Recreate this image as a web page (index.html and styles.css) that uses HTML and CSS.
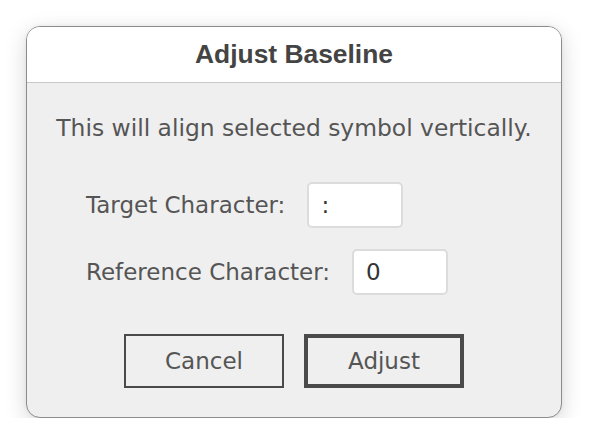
FILE: index.html
```html
<!DOCTYPE html>
<html lang="en">
<head>
<meta charset="utf-8">
<title>Adjust Baseline</title>
<link rel="stylesheet" href="styles.css">
</head>
<body>
<div class="dialog">
  <div class="dialog-header">
    <h1 class="dialog-title">Adjust Baseline</h1>
  </div>
  <div class="dialog-body">
    <p class="message">This will align selected symbol vertically.</p>
    <div class="fields">
      <label class="field">
        <span class="field-label">Target Character:</span>
        <input class="field-input" type="text" value=":">
      </label>
      <label class="field">
        <span class="field-label">Reference Character:</span>
        <input class="field-input" type="text" value="0">
      </label>
    </div>
    <div class="actions">
      <button class="btn" type="button">Cancel</button>
      <button class="btn btn-default" type="button">Adjust</button>
    </div>
  </div>
</div>
</body>
</html>
```

FILE: styles.css
```css
* {
  box-sizing: border-box;
}

html, body {
  margin: 0;
  padding: 0;
  background: #ffffff;
}

body {
  padding: 26px 0 0 26px;
  font-family: "DejaVu Sans", "Noto Sans", sans-serif;
}

.dialog {
  width: 536px;
  height: 392px;
  border: 1px solid #8c8c8c;
  border-radius: 14px;
  background: #efefef;
  overflow: hidden;
  box-shadow: 0 6px 22px rgba(0, 0, 0, 0.16), 0 0 4px rgba(0, 0, 0, 0.05);
  display: flex;
  flex-direction: column;
}

.dialog-header {
  height: 56px;
  flex: none;
  background: #ffffff;
  border-bottom: 1px solid #c9c9c9;
  display: flex;
  align-items: center;
  justify-content: center;
}

.dialog-title {
  margin: 0;
  padding-bottom: 2px;
  font-family: "Liberation Sans", Arial, sans-serif;
  font-weight: bold;
  font-size: 26.4px;
  color: #444444;
  line-height: 30px;
}

.dialog-body {
  flex: 1;
  display: flex;
  flex-direction: column;
  padding: 32px 0 0 0;
}

.message {
  margin: 0;
  text-align: center;
  font-size: 23.4px;
  line-height: 27px;
  color: #555555;
}

.fields {
  display: flex;
  flex-direction: column;
  align-items: flex-start;
  gap: 21px;
  padding-left: 59px;
  margin-top: 40px;
}

.field {
  display: flex;
  align-items: center;
  gap: 22px;
}

.field-label {
  font-size: 23px;
  color: #555555;
  line-height: 27px;
}

.field-input {
  width: 96px;
  height: 46px;
  border: 2px solid #dcdcdc;
  border-radius: 5px;
  background: #ffffff;
  padding: 0 0 0 12px;
  font-family: "DejaVu Sans", sans-serif;
  font-size: 23px;
  color: #333333;
  outline: none;
}

.actions {
  display: flex;
  justify-content: center;
  gap: 20px;
  margin-top: 39px;
}

.btn {
  width: 160px;
  height: 54px;
  border: 2px solid #4a4a4a;
  border-radius: 0;
  background: #efefef;
  font-family: "DejaVu Sans", sans-serif;
  font-size: 23px;
  color: #555555;
  padding: 0;
}

.btn-default {
  border-width: 4px;
}
```
